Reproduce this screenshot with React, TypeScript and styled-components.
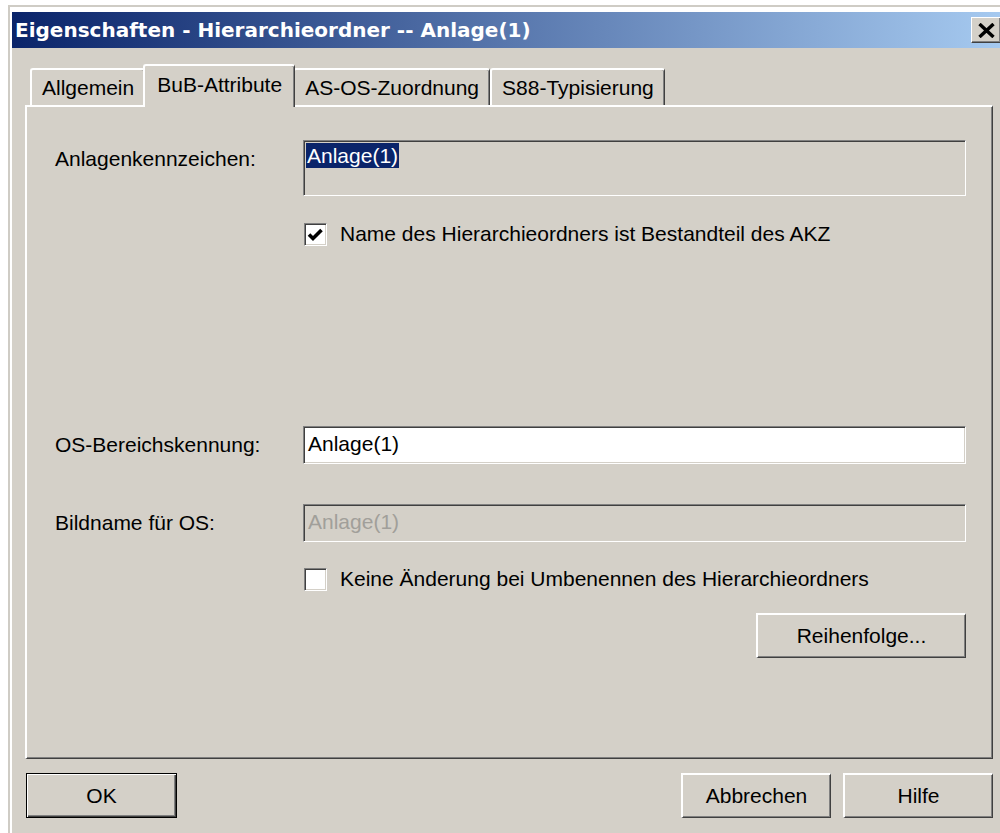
import React from "react";
import styled, { createGlobalStyle } from "styled-components";

const GlobalStyle = createGlobalStyle`
  html, body {
    margin: 0;
    padding: 0;
    background: #ffffff;
    overflow: hidden;
  }
  body {
    font-family: "Liberation Sans", Arial, sans-serif;
    font-size: 21px;
    color: #000000;
  }
`;

const tabs = ["Allgemein", "BuB-Attribute", "AS-OS-Zuordnung", "S88-Typisierung"];

const CheckMark = () => (
  <svg width="19" height="19" viewBox="0 0 19 19">
    <polyline points="3,9.5 7,13.5 15.5,5" fill="none" stroke="#000" strokeWidth="3.6" />
  </svg>
);

const CloseGlyph = () => (
  <svg width="17" height="15" viewBox="0 0 17 15">
    <path d="M1.5 1 L15.5 14 M15.5 1 L1.5 14" stroke="#000" strokeWidth="3.4" />
  </svg>
);

const App = () => {
  return (
    <>
      <GlobalStyle />
      <Window>
        <Inner>
          <TitleBar>
            <Title>Eigenschaften - Hierarchieordner -- Anlage(1)</Title>
            <CloseBtn>
              <CloseGlyph />
            </CloseBtn>
          </TitleBar>
          <Body>
            <TabStrip>
              {tabs.map((t, i) => (
                <Tab key={t} $active={i === 1}>
                  {t}
                </Tab>
              ))}
            </TabStrip>
            <Panel>
              <FieldRow>
                <Label>Anlagenkennzeichen:</Label>
                <Field $height={56} $disabled>
                  <Selected>Anlage(1)</Selected>
                </Field>
              </FieldRow>
              <CheckRow $gap={26}>
                <CheckBox>
                  <CheckMark />
                </CheckBox>
                <CheckText>Name des Hierarchieordners ist Bestandteil des AKZ</CheckText>
              </CheckRow>
              <FieldRow $gap={180}>
                <Label>OS-Bereichskennung:</Label>
                <Field>Anlage(1)</Field>
              </FieldRow>
              <FieldRow $gap={40}>
                <Label>Bildname für OS:</Label>
                <Field $disabled $dim>
                  Anlage(1)
                </Field>
              </FieldRow>
              <CheckRow $gap={25}>
                <CheckBox />
                <CheckText>Keine Änderung bei Umbenennen des Hierarchieordners</CheckText>
              </CheckRow>
              <ActionRow>
                <Button $width={210}>Reihenfolge...</Button>
              </ActionRow>
            </Panel>
            <Footer>
              <Button $width={151} $default>
                OK
              </Button>
              <ButtonGroup>
                <Button $width={150}>Abbrechen</Button>
                <Button $width={150}>Hilfe</Button>
              </ButtonGroup>
            </Footer>
          </Body>
        </Inner>
      </Window>
    </>
  );
};

export default App;

const Window = styled.div`
  margin: 5px 0 0 8px;
  width: 996px;
  height: 828px;
  box-sizing: border-box;
  border-top: 2px solid #cfccc5;
  border-left: 2px solid #cfccc5;
  padding: 5px 0 0 2px;
  background: #ffffff;
`;

const Inner = styled.div`
  height: 100%;
  background: #d4d0c8;
  display: flex;
  flex-direction: column;
`;

const TitleBar = styled.div`
  height: 36px;
  display: flex;
  align-items: center;
  justify-content: space-between;
  padding-left: 3px;
  background: linear-gradient(to right, #0a246a, #a6caf0);
`;

const Title = styled.div`
  font-family: "DejaVu Sans", Verdana, sans-serif;
  font-weight: bold;
  font-size: 20px;
  color: #ffffff;
  white-space: nowrap;
`;

const CloseBtn = styled.div`
  width: 30px;
  height: 26px;
  margin-right: 3px;
  box-sizing: border-box;
  background: #d4d0c8;
  border-top: 1px solid #ffffff;
  border-left: 1px solid #ffffff;
  border-right: 1px solid #404040;
  border-bottom: 1px solid #404040;
  box-shadow: inset -1px -1px 0 #808080;
  display: flex;
  align-items: center;
  justify-content: center;
`;

const Body = styled.div`
  padding: 16px 0 0 13px;
  flex: 1;
`;

const TabStrip = styled.div`
  display: flex;
  align-items: flex-end;
  height: 41px;
  padding-left: 5px;
  position: relative;
  z-index: 1;
`;

const Tab = styled.div<{ $active?: boolean }>`
  box-sizing: border-box;
  height: ${(p) => (p.$active ? "43px" : "37px")};
  margin: ${(p) => (p.$active ? "0 -2px -2px" : "0")};
  padding: ${(p) => (p.$active ? "0 12px 4px" : "0 10px")};
  display: flex;
  align-items: center;
  white-space: nowrap;
  background: #d4d0c8;
  border-top: 2px solid #ffffff;
  border-left: 2px solid #ffffff;
  border-right: 1px solid #404040;
  box-shadow: inset -1px 0 0 #808080;
  border-radius: 3px 3px 0 0;
  position: relative;
  z-index: ${(p) => (p.$active ? 2 : 0)};
`;

const Panel = styled.div`
  width: 968px;
  height: 654px;
  box-sizing: border-box;
  border-top: 2px solid #ffffff;
  border-left: 2px solid #ffffff;
  border-right: 1px solid #404040;
  border-bottom: 1px solid #404040;
  box-shadow: inset -1px -1px 0 #808080;
  padding: 33px 26px 0 28px;
  display: flex;
  flex-direction: column;
`;

const FieldRow = styled.div<{ $gap?: number }>`
  display: grid;
  grid-template-columns: 248px 1fr;
  align-items: start;
  margin-top: ${(p) => p.$gap ?? 0}px;
`;

const Label = styled.div`
  line-height: 38px;
  white-space: nowrap;
`;

const Field = styled.div<{ $height?: number; $disabled?: boolean; $dim?: boolean }>`
  height: ${(p) => p.$height ?? 38}px;
  box-sizing: border-box;
  background: ${(p) => (p.$disabled ? "#d4d0c8" : "#ffffff")};
  color: ${(p) => (p.$dim ? "#a19f9a" : "#000000")};
  border-top: 1px solid #808080;
  border-left: 1px solid #808080;
  border-right: 1px solid #ffffff;
  border-bottom: 1px solid #ffffff;
  box-shadow: inset 1px 1px 0 #404040, inset -1px -1px 0 #d4d0c8;
  padding: ${(p) => (p.$height ? "2px 0 0 2px" : "0 0 0 4px")};
  line-height: ${(p) => (p.$height ? "25px" : "34px")};
  white-space: nowrap;
`;

const Selected = styled.span`
  display: inline-block;
  background: #0a246a;
  color: #ffffff;
  padding: 0 1px;
`;

const CheckRow = styled.div<{ $gap?: number }>`
  display: flex;
  align-items: center;
  gap: 13px;
  padding-left: 249px;
  margin-top: ${(p) => p.$gap ?? 0}px;
`;

const CheckBox = styled.div`
  width: 23px;
  height: 23px;
  box-sizing: border-box;
  background: #ffffff;
  border-top: 1px solid #808080;
  border-left: 1px solid #808080;
  border-right: 1px solid #ffffff;
  border-bottom: 1px solid #ffffff;
  box-shadow: inset 1px 1px 0 #404040, inset -1px -1px 0 #d4d0c8;
  padding: 1px;
  display: flex;
`;

const CheckText = styled.span`
  white-space: nowrap;
`;

const ActionRow = styled.div`
  display: flex;
  justify-content: flex-end;
  margin-top: 22px;
`;

const Button = styled.div<{ $width: number; $default?: boolean }>`
  width: ${(p) => p.$width}px;
  height: 45px;
  box-sizing: border-box;
  display: flex;
  align-items: center;
  justify-content: center;
  background: #d4d0c8;
  border-top: 2px solid #ffffff;
  border-left: 2px solid #ffffff;
  border-right: 1px solid #404040;
  border-bottom: 1px solid #404040;
  box-shadow: inset -1px -1px 0 #808080;
  ${(p) =>
    p.$default &&
    `
    border: 1px solid #000;
    box-shadow: inset 1px 1px 0 #fff, inset -1px -1px 0 #404040, inset -2px -2px 0 #808080;
  `}
`;

const Footer = styled.div`
  width: 968px;
  margin-top: 14px;
  padding-left: 1px;
  box-sizing: border-box;
  display: flex;
  justify-content: space-between;
`;

const ButtonGroup = styled.div`
  display: flex;
  gap: 12px;
`;
